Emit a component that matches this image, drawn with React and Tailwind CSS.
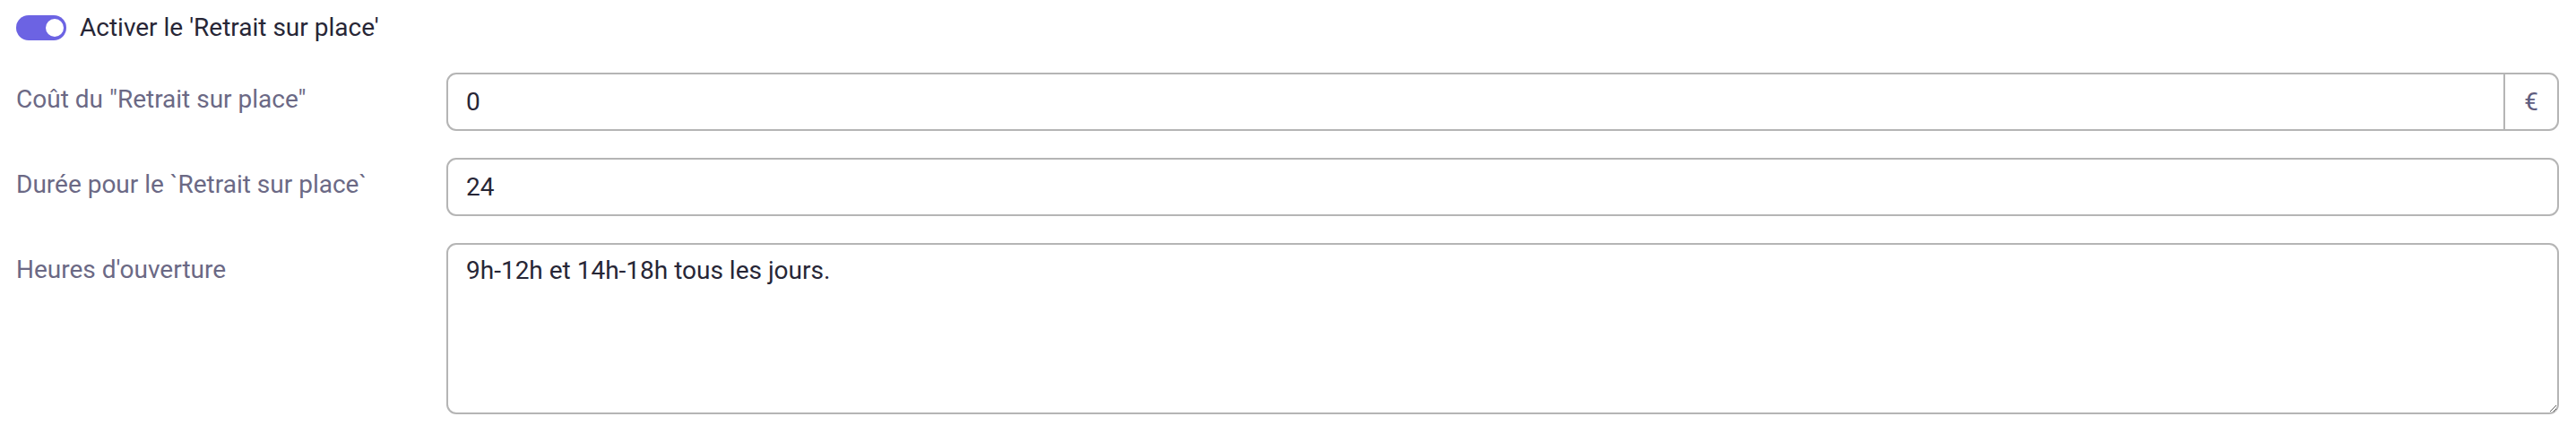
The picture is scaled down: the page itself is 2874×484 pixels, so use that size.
import React from 'react';

const Row = ({ label, children }) => (
  <div className="flex">
    <label className="w-[480px] shrink-0 pt-[10px] text-[28px] leading-[40px] text-[#6b6985]">
      {label}
    </label>
    <div className="flex-1">{children}</div>
  </div>
);

const App = () => {
  return (
    <div className="min-h-screen bg-white pl-[18px] pr-[19px] pt-[17px] font-['Roboto',sans-serif]">
      {/* Toggle */}
      <div className="flex items-center gap-[15px] h-[28px]">
        <button
          type="button"
          className="relative w-[56px] h-[28px] rounded-full bg-[#6c63e3] shrink-0"
        >
          <span className="absolute right-[3px] top-[4px] w-[20px] h-[20px] rounded-full bg-white"></span>
        </button>
        <span className="text-[28px] leading-[40px] text-[#272636]">Activer le 'Retrait sur place'</span>
      </div>

      <div className="mt-[36px] flex flex-col gap-[30px]">
        <Row label={'Coût du "Retrait sur place"'}>
          <div className="flex h-[65px] border-2 border-[#b5b5b5] rounded-[11px] overflow-hidden">
            <input
              readOnly
              value="0"
              className="flex-1 min-w-0 px-[20px] text-[28px] text-[#272636] outline-none bg-transparent"
            />
            <span className="w-[60px] flex items-center justify-center border-l-2 border-[#b5b5b5] text-[28px] text-[#5f5d7e]">
              €
            </span>
          </div>
        </Row>

        <Row label="Durée pour le `Retrait sur place`">
          <input
            readOnly
            value="24"
            className="w-full h-[65px] border-2 border-[#b5b5b5] rounded-[11px] px-[20px] text-[28px] text-[#272636] outline-none"
          />
        </Row>

        <Row label="Heures d'ouverture">
          <textarea
            readOnly
            defaultValue="9h-12h et 14h-18h tous les jours."
            className="block w-full h-[191px] border-2 border-[#b5b5b5] rounded-[11px] px-[20px] pt-[9px] text-[28px] leading-[40px] text-[#272636] outline-none"
          />
        </Row>
      </div>
    </div>
  );
};

export default App;
